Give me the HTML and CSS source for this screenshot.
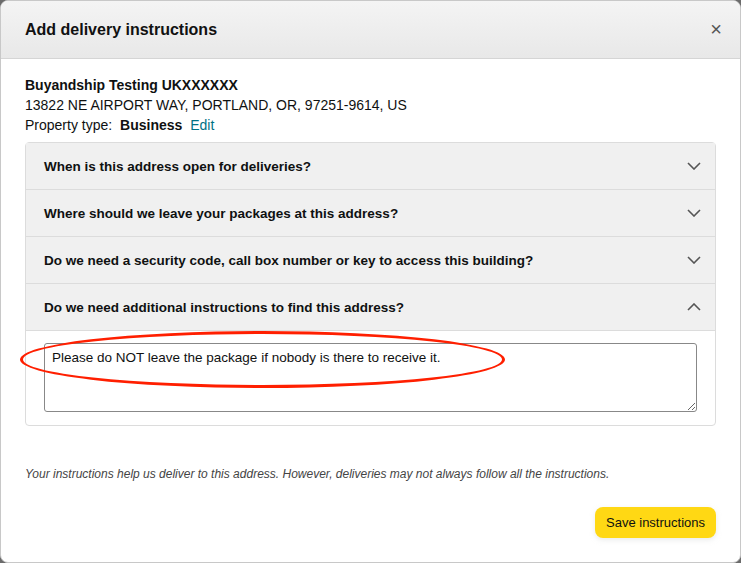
FILE: index.html
```html
<!DOCTYPE html>
<html lang="en">
<head>
    <meta charset="UTF-8">
    <meta name="viewport" content="width=device-width, initial-scale=1.0">
    <title>Add delivery instructions</title>
    <link rel="stylesheet" href="styles.css">
</head>
<body>

    <div class="modal">
        <div class="modal-header">
            <h2>Add delivery instructions</h2>
            <button class="close-btn">&times;</button>
        </div>

        <div class="modal-body">
            <div class="address">
                <div class="name">Buyandship Testing UKXXXXXX</div>
                <div>13822 NE AIRPORT WAY, PORTLAND, OR, 97251-9614, US</div>
                <div>Property type: <b class="ptype">Business</b> <a href="#" class="edit">Edit</a></div>
            </div>

            <div class="accordion">
                <div class="acc-row">
                    <span>When is this address open for deliveries?</span>
                    <svg class="chev" width="14" height="8" viewBox="0 0 14 8"><path d="M1 1l6 6 6-6" fill="none" stroke="#555" stroke-width="1.6"/></svg>
                </div>
                <div class="acc-row">
                    <span>Where should we leave your packages at this address?</span>
                    <svg class="chev" width="14" height="8" viewBox="0 0 14 8"><path d="M1 1l6 6 6-6" fill="none" stroke="#555" stroke-width="1.6"/></svg>
                </div>
                <div class="acc-row">
                    <span>Do we need a security code, call box number or key to access this building?</span>
                    <svg class="chev" width="14" height="8" viewBox="0 0 14 8"><path d="M1 1l6 6 6-6" fill="none" stroke="#555" stroke-width="1.6"/></svg>
                </div>
                <div class="acc-row">
                    <span>Do we need additional instructions to find this address?</span>
                    <svg class="chev" width="14" height="8" viewBox="0 0 14 8"><path d="M1 7l6-6 6 6" fill="none" stroke="#555" stroke-width="1.6"/></svg>
                </div>
                <div class="acc-content">
                    <textarea rows="3">Please do NOT leave the package if nobody is there to receive it.</textarea>
                    <!-- red markup circle -->
                    <div class="mark"></div>
                </div>
            </div>

            <p class="note">Your instructions help us deliver to this address. However, deliveries may not always follow all the instructions.</p>

            <div class="actions">
                <button class="save-btn">Save instructions</button>
            </div>
        </div>
    </div>

</body>
</html>
```

FILE: styles.css
```css
html, body {
    margin: 0;
    height: 100%;
}

body {
    background: #6b6b6b;
    font-family: "Liberation Sans", Arial, sans-serif;
    color: #0f1111;
    font-size: 14px;
}

.modal {
    box-sizing: border-box;
    width: 741px;
    height: 563px;
    background: white;
    border: 1px solid #c8c8c8;
    border-radius: 8px;
    overflow: hidden;
}

.modal-header {
    display: flex;
    align-items: center;
    justify-content: space-between;
    height: 57px;
    padding: 0 18px 0 24px;
    background: linear-gradient(#f4f4f4, #e8e8e8);
    border-bottom: 1px solid #d5d5d5;
}

.modal-header h2 {
    margin: 0;
    font-size: 16px;
    font-weight: bold;
    color: #111;
}

.close-btn {
    background: none;
    border: none;
    font-size: 20px;
    color: #555;
    cursor: pointer;
    padding: 0;
    font-family: "Liberation Sans", Arial, sans-serif;
}

.modal-body {
    padding: 16px 24px 0 24px;
}

.address {
    line-height: 20px;
    margin-bottom: 7px;
}

.name {
    font-weight: bold;
}

.ptype {
    margin-left: 4px;
    margin-right: 4px;
}

.edit {
    color: #007185;
    text-decoration: none;
}

.accordion {
    border: 1px solid #dcdcdc;
    border-radius: 4px;
}

.acc-row {
    display: flex;
    align-items: center;
    justify-content: space-between;
    height: 46px;
    padding: 0 14px 0 18px;
    background: #f0f0f0;
    border-bottom: 1px solid #dcdcdc;
    font-weight: bold;
    font-size: 13.5px;
}

.acc-content {
    position: relative;
    padding: 12px 18px 13px 18px;
}

.acc-content textarea {
    box-sizing: border-box;
    display: block;
    width: 100%;
    height: 69px;
    padding: 6px 7px;
    border: 1px solid #888;
    border-radius: 3px;
    font-family: "Liberation Sans", Arial, sans-serif;
    font-size: 13.5px;
    color: #0f1111;
    resize: vertical;
}

.mark {
    position: absolute;
    left: -6px;
    top: 0px;
    width: 479px;
    height: 51px;
    border: 3px solid #ff1f00;
    border-radius: 50%;
    pointer-events: none;
}

.note {
    margin: 41px 0 0 0;
    font-size: 12px;
    font-style: italic;
    color: #444;
}

.actions {
    display: flex;
    justify-content: flex-end;
    margin-top: 26px;
}

.save-btn {
    background: #ffd814;
    border: none;
    border-radius: 8px;
    padding: 0 11px;
    height: 31px;
    font-size: 13px;
    color: #0f1111;
    cursor: pointer;
    box-shadow: 0 2px 5px rgba(213, 217, 217, 0.5);
    font-family: "Liberation Sans", Arial, sans-serif;
}
```
